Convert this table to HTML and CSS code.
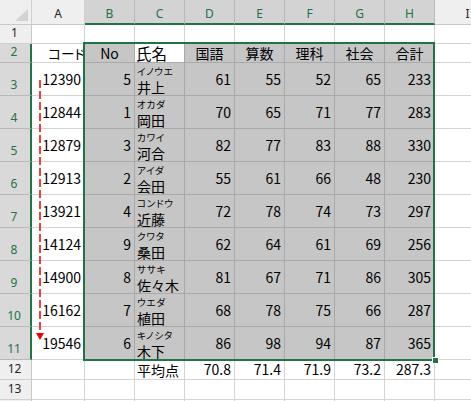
FILE: index.html
```html
<!DOCTYPE html>
<html lang="ja">
<head>
<meta charset="utf-8">
<link rel="stylesheet" href="styles.css">
</head>
<body>
<div class="wrap">
<div class="sheet">
  <div class="ch corner"><span class="tri"></span></div>
  <div class="ch">A</div><div class="ch sel">B</div><div class="ch sel">C</div><div class="ch sel">D</div><div class="ch sel">E</div><div class="ch sel">F</div><div class="ch sel">G</div><div class="ch sel">H</div><div class="ch">I</div>

  <div class="rh">1</div>
  <div class="c"></div><div class="c"></div><div class="c"></div><div class="c"></div><div class="c"></div><div class="c"></div><div class="c"></div><div class="c"></div><div class="c"></div>

  <div class="rh sel">2</div>
  <div class="c r code"><span class="kana">コード</span></div>
  <div class="c s ctr">No</div><div class="c act big">氏名</div><div class="c s ctr">国語</div><div class="c s ctr">算数</div><div class="c s ctr">理科</div><div class="c s ctr">社会</div><div class="c s ctr">合計</div><div class="c"></div>

  <div class="rh sel tall">3</div>
  <div class="c r">12390</div><div class="c s r">5</div><div class="c s nm"><span class="fu">イノウエ</span><span class="kj">井上</span></div><div class="c s r">61</div><div class="c s r">55</div><div class="c s r">52</div><div class="c s r">65</div><div class="c s r">233</div><div class="c"></div>

  <div class="rh sel tall">4</div>
  <div class="c r">12844</div><div class="c s r">1</div><div class="c s nm"><span class="fu">オカダ</span><span class="kj">岡田</span></div><div class="c s r">70</div><div class="c s r">65</div><div class="c s r">71</div><div class="c s r">77</div><div class="c s r">283</div><div class="c"></div>

  <div class="rh sel tall">5</div>
  <div class="c r">12879</div><div class="c s r">3</div><div class="c s nm"><span class="fu">カワイ</span><span class="kj">河合</span></div><div class="c s r">82</div><div class="c s r">77</div><div class="c s r">83</div><div class="c s r">88</div><div class="c s r">330</div><div class="c"></div>

  <div class="rh sel tall">6</div>
  <div class="c r">12913</div><div class="c s r">2</div><div class="c s nm"><span class="fu">アイダ</span><span class="kj">会田</span></div><div class="c s r">55</div><div class="c s r">61</div><div class="c s r">66</div><div class="c s r">48</div><div class="c s r">230</div><div class="c"></div>

  <div class="rh sel tall">7</div>
  <div class="c r">13921</div><div class="c s r">4</div><div class="c s nm"><span class="fu">コンドウ</span><span class="kj">近藤</span></div><div class="c s r">72</div><div class="c s r">78</div><div class="c s r">74</div><div class="c s r">73</div><div class="c s r">297</div><div class="c"></div>

  <div class="rh sel tall">8</div>
  <div class="c r">14124</div><div class="c s r">9</div><div class="c s nm"><span class="fu">クワタ</span><span class="kj">桑田</span></div><div class="c s r">62</div><div class="c s r">64</div><div class="c s r">61</div><div class="c s r">69</div><div class="c s r">256</div><div class="c"></div>

  <div class="rh sel tall">9</div>
  <div class="c r">14900</div><div class="c s r">8</div><div class="c s nm"><span class="fu">ササキ</span><span class="kj">佐々木</span></div><div class="c s r">81</div><div class="c s r">67</div><div class="c s r">71</div><div class="c s r">86</div><div class="c s r">305</div><div class="c"></div>

  <div class="rh sel tall">10</div>
  <div class="c r">16162</div><div class="c s r">7</div><div class="c s nm"><span class="fu">ウエダ</span><span class="kj">植田</span></div><div class="c s r">68</div><div class="c s r">78</div><div class="c s r">75</div><div class="c s r">66</div><div class="c s r">287</div><div class="c"></div>

  <div class="rh sel tall">11</div>
  <div class="c r">19546</div><div class="c s r">6</div><div class="c s nm"><span class="fu">キノシタ</span><span class="kj">木下</span></div><div class="c s r">86</div><div class="c s r">98</div><div class="c s r">94</div><div class="c s r">87</div><div class="c s r">365</div><div class="c"></div>

  <div class="rh">12</div>
  <div class="c"></div><div class="c"></div><div class="c l">平均点</div><div class="c r">70.8</div><div class="c r">71.4</div><div class="c r">71.9</div><div class="c r">73.2</div><div class="c r">287.3</div><div class="c"></div>

  <div class="rh">13</div>
  <div class="c"></div><div class="c"></div><div class="c"></div><div class="c"></div><div class="c"></div><div class="c"></div><div class="c"></div><div class="c"></div><div class="c"></div>

  <div class="rh"></div>
  <div class="c"></div><div class="c"></div><div class="c"></div><div class="c"></div><div class="c"></div><div class="c"></div><div class="c"></div><div class="c"></div><div class="c"></div>
</div>
<div class="selbox"></div>
<div class="handle"></div>
<svg class="arrow" width="471" height="401" viewBox="0 0 471 401">
  <line x1="40" y1="80" x2="40" y2="333" stroke="#f00000" stroke-width="1.5" stroke-dasharray="8 3"/>
  <polygon points="36,333 44,333 40,340" fill="#f00000"/>
</svg>
</div>
</body>
</html>
```

FILE: styles.css
```css
html, body {
  margin: 0;
  padding: 0;
  overflow: hidden;
  background: #ffffff;
}
.wrap {
  position: relative;
  width: 471px;
  height: 401px;
  overflow: hidden;
}
.sheet {
  display: grid;
  grid-template-columns: 32px 53px repeat(7, 50px) 66px;
  grid-template-rows: 25px 19px 19px repeat(9, 33px) 20px 20px 20px;
  font-family: "Noto Sans CJK JP", "Noto Sans", sans-serif;
  color: #000;
}
.sheet > div {
  box-sizing: border-box;
  border-right: 1px solid #d4d4d4;
  border-bottom: 1px solid #d4d4d4;
  overflow: hidden;
  white-space: nowrap;
}
.ch {
  background: #efefef;
  font-family: "Noto Sans", sans-serif;
  font-size: 12px;
  line-height: 15px;
  color: #262626;
  text-align: center;
  padding-top: 6px;
  border-right-color: #cfcfcf !important;
  border-bottom-color: #c8c8c8 !important;
}
.ch.sel {
  background: #d3d3d3;
  color: #217346;
  border-bottom: 2px solid #217346 !important;
  border-right-color: #b8b8b8 !important;
}
.corner {
  position: relative;
}
.tri {
  position: absolute;
  right: 3px;
  bottom: 3px;
  width: 0;
  height: 0;
  border-left: 13px solid transparent;
  border-bottom: 12px solid #d2d2d2;
}
.rh {
  background: #efefef;
  font-family: "Noto Sans", sans-serif;
  font-size: 12px;
  line-height: 14px;
  color: #262626;
  display: flex;
  align-items: flex-end;
  justify-content: center;
  padding-bottom: 3px;
  padding-right: 2px;
  border-right-color: #c8c8c8 !important;
  border-bottom-color: #cfcfcf !important;
}
.rh.sel {
  background: #d9d9d9;
  color: #217346;
  border-right: 2px solid #217346 !important;
  border-bottom-color: #b8b8b8 !important;
}
.c {
  background: #fff;
  font-size: 14px;
  line-height: 14px;
  display: flex;
  align-items: center;
}
.c.s {
  background: #c6c6c6;
  border-right-color: #a9a9a9;
  border-bottom-color: #a9a9a9;
}
.c.r {
  justify-content: flex-end;
  padding-right: 3px;
  padding-bottom: 1px;
}
.c.l {
  padding-left: 2px;
}
.c.ctr {
  justify-content: center;
}
.c.act {
  background: #fff;
  border-right-color: #a9a9a9;
  border-bottom-color: #a9a9a9;
}
.sheet > .big {
  font-size: 15.5px;
  line-height: normal;
  padding-left: 1px;
  overflow: visible;
}
.c.code {
  padding-right: 0;
}
.kana {
  font-size: 13.5px;
  font-feature-settings: "palt" 1;
  margin-right: -1px;
}
.sheet > .nm {
  flex-direction: column;
  align-items: flex-start;
  padding-left: 2px;
  padding-top: 1px;
  overflow: visible;
}
.fu {
  display: block;
  font-size: 9.5px;
  line-height: normal;
  letter-spacing: 0.8px;
  font-feature-settings: "palt" 1;
}
.kj {
  display: block;
  font-size: 14px;
  line-height: normal;
  margin-top: -1px;
}
.selbox {
  position: absolute;
  left: 83px;
  top: 42px;
  width: 352px;
  height: 319px;
  box-sizing: border-box;
  border: 2px solid #217346;
  pointer-events: none;
}
.handle {
  position: absolute;
  left: 432px;
  top: 357px;
  width: 5px;
  height: 5px;
  background: #217346;
  border: 1px solid #ffffff;
}
.arrow {
  position: absolute;
  left: 0;
  top: 0;
  pointer-events: none;
}
```
